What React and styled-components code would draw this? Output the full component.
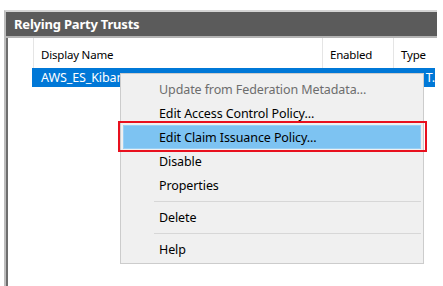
import styled, { createGlobalStyle } from 'styled-components';

const GlobalStyle = createGlobalStyle`
  html, body {
    margin: 0;
    padding: 0;
    background: #ffffff;
    width: 443px;
    height: 286px;
    overflow: hidden;
  }
  body {
    font-family: 'Noto Sans', 'Liberation Sans', sans-serif;
  }
`;

const Page = styled.div`
  position: relative;
  width: 443px;
  height: 286px;
  padding: 10px 6px 0 4px;
  box-sizing: border-box;
`;

const Frame = styled.div`
  height: 100%;
  display: flex;
  flex-direction: column;
  border-left: 2px solid #bdbdbd;
  border-top: 2px solid #d4d4d4;
`;

const TitleBar = styled.div`
  height: 24px;
  background: #5b5b5b;
  color: #ffffff;
  font-weight: 700;
  font-size: 13px;
  display: flex;
  align-items: center;
  padding-left: 8px;
  letter-spacing: -0.2px;
`;

const ListFrame = styled.div`
  flex: 1;
  border-top: 2px solid #b4b4b4;
  display: flex;
`;

const List = styled.div`
  flex: 1;
  background: #ffffff;
  border-left: 2px solid #6e6e6e;
  display: flex;
  flex-direction: column;
`;

const Row = styled.div`
  display: grid;
  grid-template-columns: 25px 289px 71px 1fr;
  height: ${(p) => p.$height}px;
  font-size: 11.5px;
  letter-spacing: -0.2px;
`;

const HeaderCell = styled.div`
  display: flex;
  align-items: center;
  padding-left: 7px;
  padding-top: 3px;
  color: #000;
  border-left: ${(p) => (p.$first ? 'none' : '1px solid #e5e5e5')};
`;

const DataRow = styled.div`
  margin-left: 24px;
  margin-right: 2px;
  height: 19px;
  background: #0078d7;
  color: #ffffff;
  font-size: 12.5px;
  letter-spacing: -0.1px;
  display: flex;
  align-items: center;
  justify-content: space-between;
  padding: 0 0 0 9px;
`;

const Menu = styled.div`
  position: absolute;
  left: 120px;
  top: 73px;
  width: 304px;
  box-sizing: border-box;
  background: #f0f0f0;
  border: 1px solid #cccccc;
  padding: 3px 2px 2px 2px;
  font-size: 12.5px;
  letter-spacing: -0.1px;
`;

const Item = styled.div`
  height: 24px;
  display: flex;
  align-items: center;
  padding-left: 35px;
  box-sizing: border-box;
  color: ${(p) => (p.$disabled ? '#6d6d6d' : '#000000')};
  background: ${(p) => (p.$active ? '#7dc3f2' : 'transparent')};
  border: 1px solid ${(p) => (p.$active ? '#99d0f5' : 'transparent')};
`;

const Separator = styled.div`
  height: 8px;
  display: flex;
  align-items: center;
  padding-left: 31px;

  &::after {
    content: '';
    flex: 1;
    height: 1px;
    background: #d7d7d7;
  }
`;

const Callout = styled.div`
  position: absolute;
  left: 118px;
  top: 121px;
  width: 309px;
  height: 31px;
  box-sizing: border-box;
  border: 2px solid #e8101e;
  pointer-events: none;
`;

export default function App() {
  return (
    <>
      <GlobalStyle />
      <Page>
        <Frame>
          <TitleBar>Relying Party Trusts</TitleBar>
          <ListFrame>
            <List>
              <Row $height={30}>
                <HeaderCell $first />
                <HeaderCell>Display Name</HeaderCell>
                <HeaderCell>Enabled</HeaderCell>
                <HeaderCell>Type</HeaderCell>
              </Row>
              <DataRow>
                <span>AWS_ES_Kibana</span>
                <span>T.</span>
              </DataRow>
            </List>
          </ListFrame>
        </Frame>
        <Menu>
          <Item $disabled>Update from Federation Metadata...</Item>
          <Item>Edit Access Control Policy...</Item>
          <Item $active>Edit Claim Issuance Policy...</Item>
          <Item>Disable</Item>
          <Item>Properties</Item>
          <Separator />
          <Item>Delete</Item>
          <Separator />
          <Item>Help</Item>
        </Menu>
        <Callout />
      </Page>
    </>
  );
}
